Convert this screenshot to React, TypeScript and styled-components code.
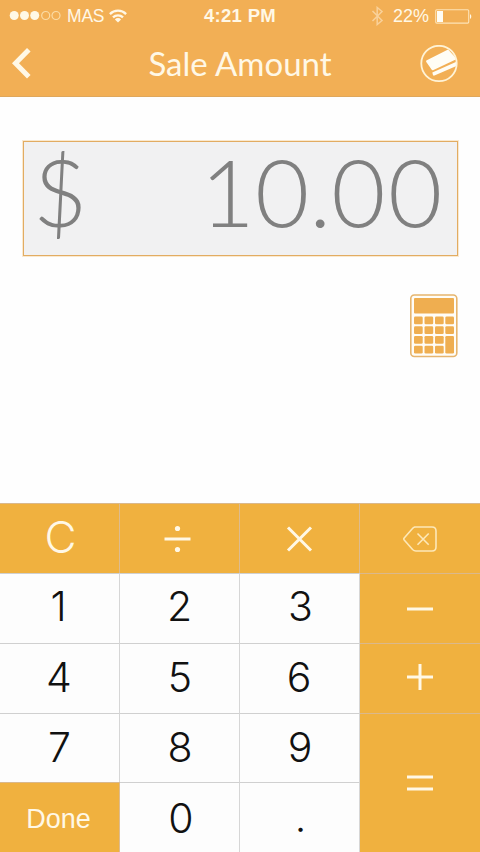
import React from "react";
import styled, { createGlobalStyle } from "styled-components";

const cream = "#fff8e6";

const GlobalStyle = createGlobalStyle`
  * { box-sizing: border-box; }
  html, body { margin: 0; padding: 0; background: #fff; }
  button { appearance: none; border: 0; margin: 0; padding: 0; background: none; }
  svg { display: block; flex: none; }
`;

const Screen = styled.main`
  width: 480px;
  height: 852px;
  display: flex;
  flex-direction: column;
  overflow: hidden;
  background: #fefefe;
`;

const Header = styled.header`
  height: 97px;
  flex: none;
  background: #f2af55;
  border-bottom: 1px solid #dfa75c;
  color: ${cream};
`;

const StatusBar = styled.div`
  height: 31px;
  display: grid;
  grid-template-columns: 1fr auto 1fr;
  align-items: center;
  padding: 1px 8px 0 8px;
  font-family: "Liberation Sans", Arial, sans-serif;
  font-size: 18px;
  line-height: 30px;
`;

const StatusGroup = styled.div<{ $end?: boolean }>`
  display: flex;
  align-items: center;
  justify-content: ${(p) => (p.$end ? "flex-end" : "flex-start")};
`;

const Carrier = styled.span`
  margin: 0 5px 0 5px;
  font-size: 17.5px;
  letter-spacing: -0.2px;
`;

const Clock = styled.span`
  font-size: 18.5px;
  font-weight: 700;
  letter-spacing: 0.3px;
`;

const Percent = styled.span`
  margin: 0 6px 0 9px;
  font-size: 18px;
`;

const TitleBar = styled.div`
  height: 65px;
  display: grid;
  grid-template-columns: 60px 1fr 60px;
  align-items: center;
`;

const Title = styled.h1`
  margin: 0;
  text-align: center;
  font-family: Lato, sans-serif;
  font-weight: 400;
  font-size: 33px;
  line-height: 65px;
  white-space: nowrap;
`;

const IconButton = styled.button`
  display: flex;
  align-items: center;
  height: 65px;
`;

const Content = styled.section`
  flex: 1;
  display: flex;
  flex-direction: column;
  align-items: flex-end;
  padding: 44px 22px 0;
`;

const AmountField = styled.div`
  width: 435px;
  height: 115px;
  display: flex;
  justify-content: space-between;
  padding: 0 12px 0 9px;
  background: #f1f1f2;
  border: 1px solid #e2ac62;
  box-shadow: 0 0 0 1px rgba(242, 185, 100, 0.3);
  color: #808080;
  font-family: Lato, sans-serif;
  font-weight: 300;
  font-size: 93.6px;
  line-height: 99px;
`;

const Figure = styled.span<{ $spacing?: number }>`
  letter-spacing: ${(p) => p.$spacing ?? 0}px;
`;

const CalculatorButton = styled.button`
  margin-top: 38px;
`;

const Keypad = styled.section`
  height: 349px;
  flex: none;
  display: grid;
  grid-template-columns: repeat(4, 120px);
  grid-template-rows: 70px 70px 70px 69px 70px;
`;

type KeyTone = "digit" | "action";

const Key = styled.button<{ $tone: KeyTone; $tall?: boolean; $last?: boolean }>`
  display: flex;
  align-items: center;
  justify-content: center;
  grid-row: ${(p) => (p.$tall ? "span 2" : "auto")};
  background: ${(p) => (p.$tone === "action" ? "#f0b13f" : "#fdfdfd")};
  color: ${(p) => (p.$tone === "action" ? cream : "#111")};
  border-top: 1px solid ${(p) => (p.$tone === "action" ? "#dab88c" : "#d0d0d0")};
  border-right: ${(p) => (p.$last ? 0 : 1)}px solid ${(p) => (p.$tone === "action" ? "#dcbb90" : "#d6d6d6")};
`;

const KeyLabel = styled.span<{ $size?: number; $x?: number; $y?: number; $weight?: number }>`
  font-family: Inter, "Liberation Sans", sans-serif;
  font-weight: ${(p) => p.$weight ?? 300};
  font-size: ${(p) => p.$size ?? 41}px;
  line-height: 1;
  transform: translate(${(p) => p.$x ?? 0}px, ${(p) => p.$y ?? 0}px);
`;

const DoneLabel = styled.span`
  font-family: "Liberation Sans", Arial, sans-serif;
  font-size: 27px;
  line-height: 1;
  transform: translate(-1px, 2px);
`;

const SignalDots = () => (
  <svg width="54" height="12" viewBox="-1 0 54 12">
    {[5.2, 15.5, 25.7].map((x) => <circle key={x} cx={x} cy="5.5" r="4.5" fill={cream} />)}
    {[36.7, 47].map((x) => <circle key={x} cx={x} cy="5.5" r="4" fill="none" stroke="#fbdca6" strokeWidth="1.2" />)}
  </svg>
);

const Wifi = () => (
  <svg width="18" height="14" viewBox="0 0 18 14" fill="none" stroke={cream} strokeWidth="2.3">
    <path d="M.9 5.1a11.4 11.4 0 0 1 16.2 0M4 8.4a7 7 0 0 1 10 0" />
    <path d="M9 13.5 5.9 10.4a4.4 4.4 0 0 1 6.2 0Z" fill={cream} stroke="none" />
  </svg>
);

const Bluetooth = () => (
  <svg width="13" height="20" viewBox="0 0 13 20" fill="none" stroke="#f9d19a" strokeWidth="1.5">
    <path d="m1.5 5 9.5 9.5L6.2 18.5V1.5L11 5.5 1.5 15" />
  </svg>
);

const Battery = () => (
  <svg width="37" height="15" viewBox="0 0 37 15">
    <rect x=".7" y=".7" width="33" height="13.4" rx="1" fill="none" stroke="#fde3b7" strokeWidth="1.1" />
    <path d="M2 2h6v11H2z" fill="#fffdf5" />
    <path d="M35 5.2c1.7.4 1.7 4.2 0 4.7Z" fill={cream} />
  </svg>
);

const BackChevron = () => (
  <svg width="34" height="34" viewBox="0 0 34 34" fill="none" stroke={cream} strokeWidth="5">
    <path d="M28.8 2.8 15.5 16.3 28.8 29.8" />
  </svg>
);

const CardBadge = () => (
  <svg width="38" height="38" viewBox="0 0 38 38">
    <defs><clipPath id="badge"><circle cx="19" cy="18.5" r="18" /></clipPath></defs>
    <g clipPath="url(#badge)" fill="#fffdf5">
      <path d="m6.8 15.2 21.3-10.7 8.7 9.5L13.5 25c-1 .5-1.7.2-2.1-.7L6.3 16.9c-.4-.8-.2-1.4.5-1.7Z" />
      <path d="m12.3 27.4 25-11v4.2L14.5 30.5c-.7.3-1.2.1-1.5-.6Z" />
    </g>
    <circle cx="19" cy="18.5" r="17.7" fill="none" stroke="#fff3d6" strokeWidth="1.8" />
  </svg>
);

const Calculator = () => (
  <svg width="48" height="64" viewBox="0 0 48 64">
    <rect x=".8" y="1" width="46" height="61.5" rx="3.5" fill="#fffdf7" stroke="#e6b56e" strokeWidth="1.6" />
    <g fill="#efae50">
      <rect x="4" y="4" width="40" height="15.5" rx="1" />
      {[22.4, 32.2, 42, 51.8].map((y, row) =>
        [4, 14.5, 25, 35.3].map((x, col) =>
          col === 3 && row > 1 ? null : <rect key={`${x}-${y}`} x={x} y={y} width="8.7" height="7.8" rx="1.3" />
        )
      )}
      <rect x="35.3" y="42" width="8.7" height="17.6" rx="1.3" />
    </g>
  </svg>
);

type OperatorName = "divide" | "times" | "minus" | "plus" | "equals";

const operatorPaths: Record<OperatorName, string> = {
  divide: "M3 17h26",
  times: "M5 5.5 28 28.5M28 5.5 5 28.5",
  minus: "M4 17h26",
  plus: "M4 17h26M17 4v26",
  equals: "M4 11h26M4 23h26",
};

const OperatorSvg = styled.svg<{ $y?: number; $x?: number }>`
  transform: translate(${(p) => p.$x ?? 0}px, ${(p) => p.$y ?? 0}px);
`;

const Operator = ({ name, x, y }: { name: OperatorName; x?: number; y?: number }) => (
  <OperatorSvg $x={x} $y={y} width="34" height="34" viewBox="0 0 34 34" fill="none" stroke={cream} strokeWidth="3">
    <path d={operatorPaths[name]} />
    {name === "divide" && <g fill={cream} stroke="none"><circle cx="16" cy="6.5" r="2.6" /><circle cx="16" cy="27.5" r="2.6" /></g>}
  </OperatorSvg>
);

const Backspace = () => (
  <svg width="34" height="26" viewBox="0 0 34 26" fill="none" stroke="#fde8b8" strokeWidth="1.6">
    <path d="M11.5 1H29q4 0 4 4v16q0 4-4 4H13q-2 0-3.4-1.5L1.2 14Q.4 13 1.2 12L9.5 2.5Q10.5 1 12.5 1Z" strokeLinejoin="round" />
    <path d="m14.5 7.5 11.2 11.2m0-11.2L14.5 18.7" />
  </svg>
);

const Digit = ({ value, x, y = 0 }: { value: string; x?: number; y?: number }) => (
  <Key $tone="digit"><KeyLabel $x={x} $y={y}>{value}</KeyLabel></Key>
);

export default function App() {
  return (
    <>
      <GlobalStyle />
      <Screen>
        <Header>
          <StatusBar>
            <StatusGroup><SignalDots /><Carrier>MAS</Carrier><Wifi /></StatusGroup>
            <Clock>4:21 PM</Clock>
            <StatusGroup $end><Bluetooth /><Percent>22%</Percent><Battery /></StatusGroup>
          </StatusBar>
          <TitleBar>
            <IconButton aria-label="Back"><BackChevron /></IconButton>
            <Title>Sale Amount</Title>
            <IconButton aria-label="Card"><CardBadge /></IconButton>
          </TitleBar>
        </Header>
        <Content>
          <AmountField>
            <span>$</span>
            <span><Figure $spacing={0.2}>1</Figure><Figure>0.</Figure><Figure $spacing={2.6}>00</Figure></span>
          </AmountField>
          <CalculatorButton aria-label="Calculator"><Calculator /></CalculatorButton>
        </Content>
        <Keypad>
          <Key $tone="action"><KeyLabel $size={44} $weight={300} $x={1} $y={-2}>C</KeyLabel></Key>
          <Key $tone="action"><Operator name="divide" x={-1.5} /></Key>
          <Key $tone="action"><Operator name="times" /></Key>
          <Key $tone="action" $last aria-label="Delete"><Backspace /></Key>
          <Digit value="1" x={-1} y={-2} />
          <Digit value="2" y={-2} />
          <Digit value="3" x={1} y={-2} />
          <Key $tone="action" $last><Operator name="minus" /></Key>
          <Digit value="4" x={-0.5} y={-1} />
          <Digit value="5" x={0.5} y={-1} />
          <Digit value="6" x={-0.5} y={-1} />
          <Key $tone="action" $last><Operator name="plus" y={-2} /></Key>
          <Digit value="7" y={-1} />
          <Digit value="8" x={0.5} y={-1} />
          <Digit value="9" x={0.5} y={-1} />
          <Key $tone="action" $tall $last><Operator name="equals" /></Key>
          <Key $tone="action"><DoneLabel>Done</DoneLabel></Key>
          <Digit value="0" x={1.5} y={1} />
          <Digit value="." x={1} />
        </Keypad>
      </Screen>
    </>
  );
}
